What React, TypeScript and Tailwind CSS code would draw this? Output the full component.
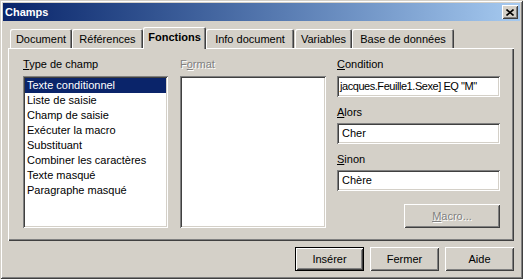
const raised =
  "shadow-[inset_1px_1px_#ffffff,inset_-1px_-1px_#404040,inset_2px_2px_#d4d0c8,inset_-2px_-2px_#808080]";
const sunken =
  "shadow-[inset_1px_1px_#808080,inset_-1px_-1px_#ffffff,inset_2px_2px_#404040,inset_-2px_-2px_#d4d0c8]";

const tabs = [
  { label: "Document", w: "w-[62px]" },
  { label: "Références", w: "w-[71px]" },
  { label: "Fonctions", w: "w-[63px]", active: true },
  { label: "Info document", w: "w-[88px]" },
  { label: "Variables", w: "w-[57px] ml-[1px]" },
  { label: "Base de données", w: "w-[102px]" },
];

const types = [
  "Texte conditionnel",
  "Liste de saisie",
  "Champ de saisie",
  "Exécuter la macro",
  "Substituant",
  "Combiner les caractères",
  "Texte masqué",
  "Paragraphe masqué",
];

export default function App() {
  return (
    <div className="w-[523px] h-[279px] bg-[#d4d0c8] p-[3px] flex flex-col font-['Liberation_Sans',Arial,sans-serif] text-[11px] text-black shadow-[inset_1px_1px_#d4d0c8,inset_-1px_-1px_#404040,inset_2px_2px_#ffffff,inset_-2px_-2px_#808080]">
      {/* Title bar */}
      <div className="h-[18px] flex items-center justify-between pl-[2px] pr-[2px] bg-linear-to-r from-[#0a246a] to-[#a6caf0]">
        <span className="font-bold text-white text-[11px] leading-[18px]">Champs</span>
        <button className={`w-[16px] h-[14px] bg-[#d4d0c8] flex items-center justify-center ${raised}`}>
          <svg width="8" height="7" viewBox="0 0 8 7">
            <path d="M0.5 0.5 L7.5 6.5 M7.5 0.5 L0.5 6.5" stroke="#000" strokeWidth="1.6" fill="none" />
          </svg>
        </button>
      </div>

      {/* Tabs */}
      <div className="mt-[6px] ml-[7px] h-[21px] flex items-end">
        {tabs.map((t) =>
          t.active ? (
            <div
              key={t.label}
              className={`${t.w} h-[22px] -mb-[1px] relative z-10 bg-[#d4d0c8] rounded-t-[2px] flex justify-center pt-[3px] leading-[14px] font-bold shadow-[inset_1px_1px_#ffffff,inset_-1px_0_#404040,inset_-2px_0_#808080]`}
            >
              {t.label}
            </div>
          ) : (
            <div
              key={t.label}
              className={`${t.w} h-[19px] rounded-t-[2px] flex justify-center pt-[3px] leading-[14px] shadow-[inset_1px_1px_#ffffff,inset_-1px_0_#404040,inset_-2px_0_#808080]`}
            >
              {t.label}
            </div>
          )
        )}
      </div>

      {/* Panel */}
      <div className="ml-[5px] w-[506px] h-[193px] flex pt-[9px] pl-[15px] shadow-[inset_1px_1px_#ffffff,inset_-1px_-1px_#404040,inset_-2px_-2px_#808080]">
        <div className="w-[145px] flex flex-col">
          <div className="h-[14px] leading-[14px] mb-[5px]">
            <span className="underline">T</span>ype de champ
          </div>
          <div className={`h-[152px] bg-white p-[2px] ${sunken}`}>
            {types.map((s, i) => (
              <div
                key={s}
                className={`h-[15px] leading-[15px] px-[2px] whitespace-nowrap ${i === 0 ? "bg-[#0a246a] text-white" : ""}`}
              >
                {s}
              </div>
            ))}
          </div>
        </div>

        <div className="ml-[12px] w-[146px] flex flex-col">
          <div className="h-[14px] leading-[14px] mb-[5px] text-[#808080] [text-shadow:1px_1px_0_#ffffff]">
            F<span className="underline">o</span>rmat
          </div>
          <div className={`h-[152px] bg-white ${sunken}`} />
        </div>

        <div className="ml-[11px] w-[163px] flex flex-col">
          <div className="h-[14px] leading-[14px] mb-[5px]">
            <span className="underline">C</span>ondition
          </div>
          <div className={`h-[21px] bg-white pl-[3px] flex items-center overflow-hidden whitespace-nowrap tracking-[-0.45px] ${sunken}`}>
            jacques.Feuille1.Sexe] EQ "M"
          </div>
          <div className="h-[14px] leading-[14px] mt-[8px] mb-[4px]">
            <span className="underline">A</span>lors
          </div>
          <div className={`h-[21px] bg-white pl-[5px] flex items-center ${sunken}`}>Cher</div>
          <div className="h-[14px] leading-[14px] mt-[8px] mb-[4px]">
            <span className="underline">S</span>inon
          </div>
          <div className={`h-[21px] bg-white pl-[5px] flex items-center ${sunken}`}>Chère</div>
          <div
            className={`mt-[13px] ml-auto w-[96px] h-[24px] bg-[#d4d0c8] flex items-center justify-center text-[#808080] [text-shadow:1px_1px_0_#ffffff] ${raised}`}
          >
            <span>
              <span className="underline">M</span>acro...
            </span>
          </div>
        </div>
      </div>

      {/* Buttons */}
      <div className="mt-[6px] mr-[6px] flex justify-end gap-[6px]">
        <div className="w-[69px] h-[24px] border border-black">
          <div className={`w-full h-full flex items-center justify-center ${raised}`}>Insérer</div>
        </div>
        <div className={`w-[69px] h-[24px] flex items-center justify-center ${raised}`}>Fermer</div>
        <div className={`w-[69px] h-[24px] flex items-center justify-center ${raised}`}>Aide</div>
      </div>
    </div>
  );
}
